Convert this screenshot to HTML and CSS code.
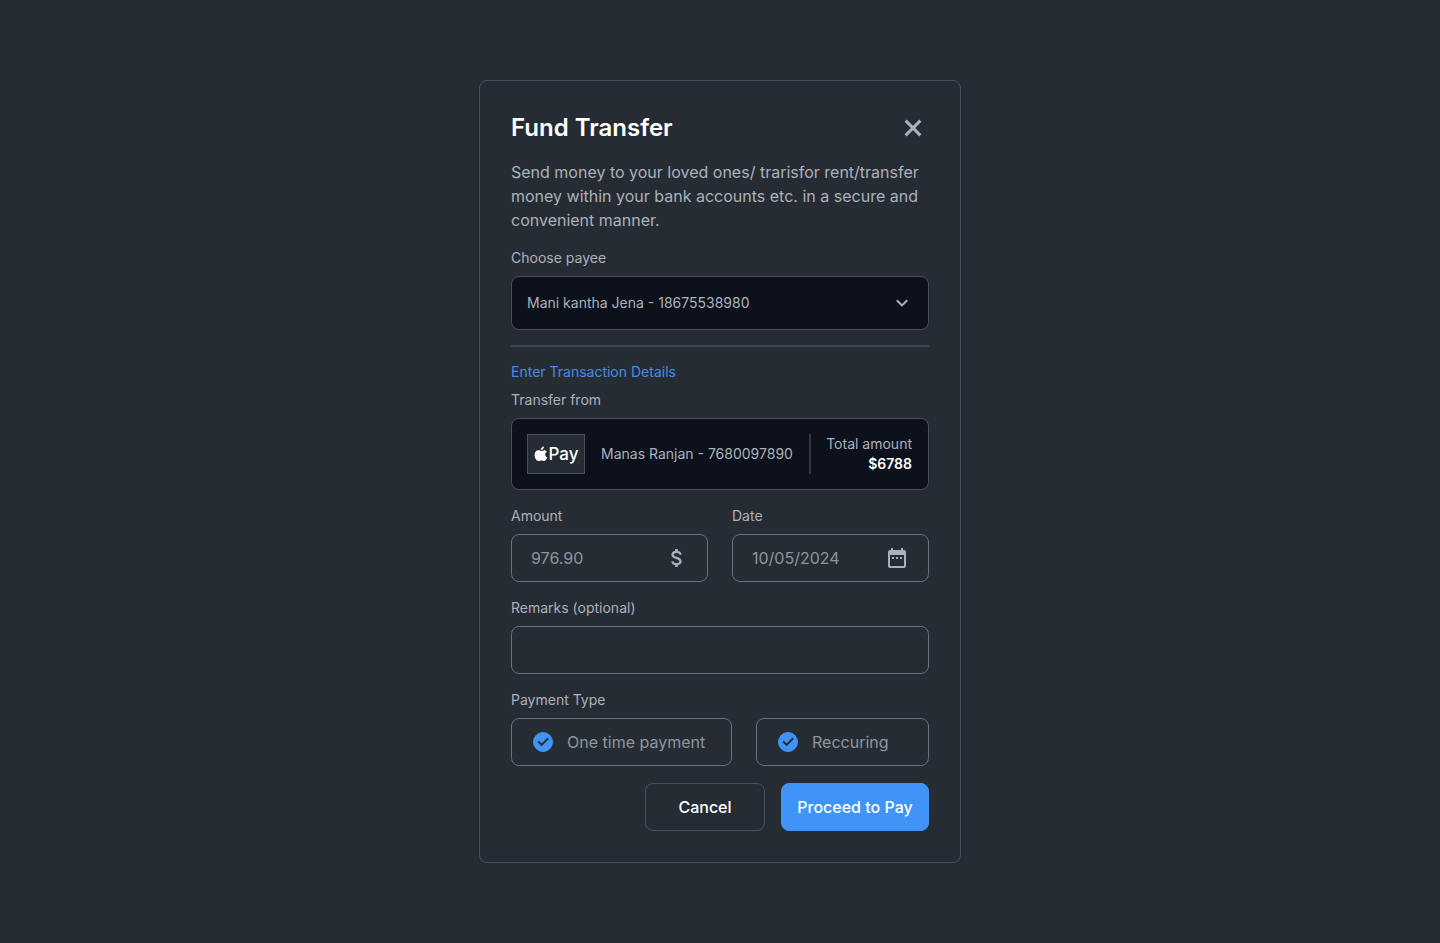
FILE: index.html
```html
<!DOCTYPE html>
<html lang="en">
<head>
<meta charset="utf-8">
<meta name="viewport" content="width=device-width, initial-scale=1">
<title>Fund Transfer</title>
<link rel="stylesheet" href="styles.css">
</head>
<body>
<main class="page">
  <form class="card">
    <header class="card-header">
      <h1 class="title">Fund Transfer</h1>
      <button class="close" type="button" aria-label="Close">
        <svg width="32" height="32" viewBox="0 0 32 32" fill="none" stroke="currentColor" stroke-width="3"><path d="M8.600 8.600l14.800 14.800M23.400 8.600L8.600 23.400"/></svg>
      </button>
    </header>
    <p class="description">Send money to your loved ones/ trarisfor rent/transfer money within your bank accounts etc. in a secure and convenient manner.</p>

    <div class="field">
      <label class="label" for="payee">Choose payee</label>
      <div class="select-wrap">
        <select class="select" id="payee"><option>Mani kantha Jena - 18675538980</option></select>
        <svg class="chevron" width="20" height="20" viewBox="0 0 20 20" fill="none" stroke="currentColor" stroke-width="2"><path d="M4.800 7.200l5.200 5.200 5.200-5.200"/></svg>
      </div>
    </div>

    <hr class="divider">

    <section class="field">
      <h2 class="section-title">Enter Transaction Details</h2>
      <span class="label">Transfer from</span>
      <div class="account">
        <div class="pay-logo">
          <svg width="14" height="16" viewBox="0 0 14 16" fill="currentColor" aria-hidden="true"><path d="M9.900 0.500c.1 1.100-.3 1.900-.9 2.600-.6.700-1.400 1.100-2.200 1-.1-.9.300-1.800.9-2.400.6-.7 1.500-1.100 2.200-1.200z"/><path d="M12.900 5.700c-1.100.7-1.700 1.500-1.700 2.700 0 1.300.8 2.400 2.200 2.900-.5 1.400-1.700 3.600-3.200 3.700-1 .1-1.500-.6-2.800-.6-1.200 0-1.700.6-2.700.6C2.500 14.900.6 11.800.6 8.900c0-2.900 1.700-4.600 3.700-4.600 1.200 0 2 .7 2.900.7.800 0 1.700-.8 3.200-.8 1.100 0 1.900.5 2.500 1.500z"/></svg>
          <span>Pay</span>
        </div>
        <span class="account-name">Manas Ranjan - 7680097890</span>
        <div class="total">
          <span>Total amount</span>
          <strong class="total-value">$6788</strong>
        </div>
      </div>
    </section>

    <div class="columns">
      <div class="field">
        <label class="label" for="amount">Amount</label>
        <div class="input-box">
          <input class="input" id="amount" type="text" inputmode="decimal" value="976.90">
          <svg width="24" height="24" viewBox="0 0 24 24" fill="none" stroke="currentColor" stroke-width="2.200" aria-hidden="true"><path d="M16.500 8.800c0-1.900-1.500-3-4-3s-4 1.100-4 2.900c0 2 1.700 2.600 4 3.200s4 1.300 4 3.300c0 1.900-1.500 3-4 3s-4-1.100-4-3"/><path d="M12.500 3v3M12.500 18v3" stroke-width="2.600"/></svg>
        </div>
      </div>
      <div class="field">
        <label class="label" for="date">Date</label>
        <div class="input-box">
          <input class="input" id="date" type="text" value="10/05/2024">
          <svg width="24" height="24" viewBox="0 0 24 24" fill="currentColor" aria-hidden="true"><path fill-rule="evenodd" d="M19 4h-1V2h-2v2H8V2H6v2H5a2 2 0 0 0-2 2v14a2 2 0 0 0 2 2h14a2 2 0 0 0 2-2V6a2 2 0 0 0-2-2zm0 16H5V9h14zM7 11h2v2H7zm4 0h2v2h-2zm4 0h2v2h-2z"/></svg>
        </div>
      </div>
    </div>

    <div class="field">
      <label class="label" for="remarks">Remarks (optional)</label>
      <div class="input-box"><input class="input" id="remarks" type="text"></div>
    </div>

    <fieldset class="payment">
      <legend class="label">Payment Type</legend>
      <div class="options">
        <label class="option">
          <span class="check"><input class="check-input" type="checkbox" checked><svg class="check-mark" width="20" height="20" viewBox="0 0 20 20" fill="none" stroke="currentColor" stroke-width="2"><path d="M5.200 9.500l3.400 3.400 6.600-6.600"/></svg></span>
          One time payment
        </label>
        <label class="option">
          <span class="check"><input class="check-input" type="checkbox" checked><svg class="check-mark" width="20" height="20" viewBox="0 0 20 20" fill="none" stroke="currentColor" stroke-width="2"><path d="M5.200 9.500l3.400 3.400 6.600-6.600"/></svg></span>
          Reccuring
        </label>
      </div>
    </fieldset>

    <footer class="actions">
      <button class="button" type="button">Cancel</button>
      <button class="button button-primary" type="submit">Proceed to Pay</button>
    </footer>
  </form>
</main>
</body>
</html>
```
FILE: styles.css
```css
:root {
  --bg: #262c34;
  --inset: #0c111b;
  --line: #495059;
  --field-line: #69707a;
  --text: #abb1bb;
  --muted: #8f959f;
  --blue: #4094f7;
}
* { box-sizing: border-box; }
body {
  margin: 0;
  background: var(--bg);
  color: var(--text);
  font: 400 14px/20px Inter, "Liberation Sans", sans-serif;
}
button, input, select { font: inherit; color: inherit; }
svg { display: block; flex: none; }
.page {
  min-height: 100vh;
  display: flex;
  align-items: center;
  justify-content: center;
}
.card {
  width: 100%;
  max-width: 482px;
  padding: 31px;
  border: 1px solid var(--line);
  border-radius: 8px;
  display: flex;
  flex-direction: column;
  gap: 16px;
}
.card-header { display: flex; align-items: center; justify-content: space-between; }
.title { margin: 0; font-size: 24px; line-height: 32px; font-weight: 600; color: #fff; }
.close { padding: 0; border: 0; background: none; cursor: pointer; }
.description { margin: 0; font-size: 16px; line-height: 24px; }
.field { display: flex; flex-direction: column; gap: 8px; min-width: 0; }
.label { padding: 0; }
.select-wrap { display: grid; align-items: center; }
.select, .chevron { grid-area: 1 / 1; }
.select {
  appearance: none;
  width: 100%;
  height: 54px;
  padding: 0 48px 0 15px;
  border: 1px solid var(--line);
  border-radius: 8px;
  background: var(--inset);
}
.chevron { justify-self: end; margin-right: 17px; pointer-events: none; }
.divider { width: 100%; height: 2px; margin: -1px 0; border: 0; background: #3d434c; }
.section-title { margin: 0; font-size: 14px; line-height: 20px; font-weight: 400; color: #428ce6; }
.account {
  display: flex;
  align-items: center;
  gap: 16px;
  padding: 15px 16px 15px 15px;
  border: 1px solid var(--line);
  border-radius: 8px;
  background: var(--inset);
}
.pay-logo {
  width: 58px;
  height: 40px;
  display: flex;
  align-items: center;
  justify-content: center;
  gap: 1px;
  flex: none;
  border: 1px solid var(--line);
  background: var(--bg);
  color: #fff;
  font-size: 17px;
  font-weight: 500;
}
.account-name { white-space: nowrap; }
.total {
  flex: 1;
  display: flex;
  flex-direction: column;
  align-items: flex-end;
  border-left: 2px solid #333a43;
  white-space: nowrap;
}
.total-value { font-weight: 600; color: #fff; }
.columns { display: grid; grid-template-columns: 1fr 1fr; gap: 24px; }
.input-box {
  height: 48px;
  display: flex;
  align-items: center;
  gap: 8px;
  padding: 0 19px;
  border: 1px solid var(--field-line);
  border-radius: 8px;
}
.input {
  flex: 1;
  min-width: 0;
  padding: 0;
  border: 0;
  outline: 0;
  background: none;
  color: var(--muted);
  font-size: 16px;
  line-height: 24px;
}
.payment { margin: 0; padding: 0; border: 0; min-width: 0; }
.options { display: grid; grid-template-columns: 221fr 173fr; gap: 24px; margin-top: 8px; }
.option {
  height: 48px;
  display: flex;
  align-items: center;
  gap: 14px;
  padding: 0 21px;
  border: 1px solid var(--field-line);
  border-radius: 8px;
  color: var(--muted);
  font-size: 16px;
  white-space: nowrap;
}
.check { display: grid; flex: none; }
.check-input, .check-mark { grid-area: 1 / 1; }
.check-input {
  appearance: none;
  width: 20px;
  height: 20px;
  margin: 0;
  border: 1px solid var(--blue);
  border-radius: 50%;
}
.check-input:checked { background: var(--blue); }
.check-mark { color: var(--bg); pointer-events: none; visibility: hidden; }
.check-input:checked + .check-mark { visibility: visible; }
.actions { display: flex; justify-content: flex-end; gap: 16px; padding-top: 1px; }
.button {
  min-width: 120px;
  height: 48px;
  padding: 0 16px;
  border: 1px solid var(--line);
  border-radius: 8px;
  background: none;
  color: #fff;
  font-size: 16px;
  font-weight: 500;
  cursor: pointer;
}
.button-primary { padding: 0 15px; min-width: 148px; border-color: var(--blue); background: var(--blue); }
```
